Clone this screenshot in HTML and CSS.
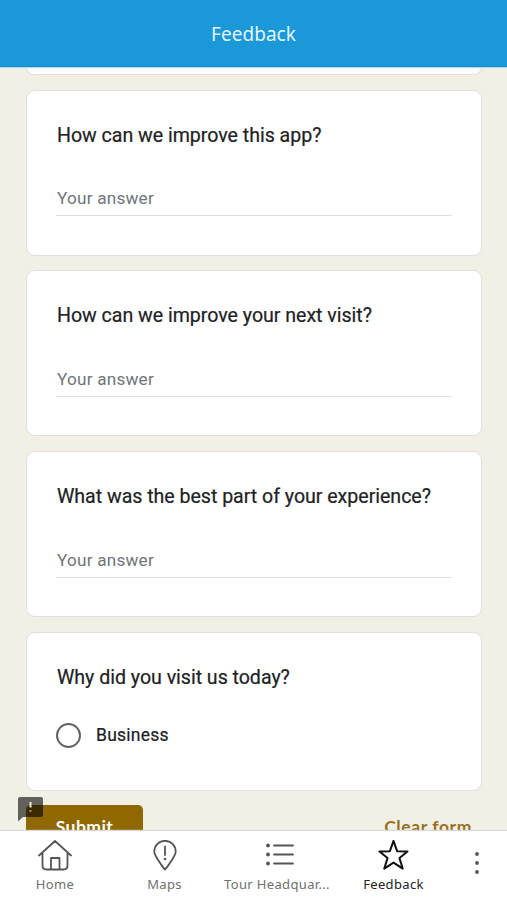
FILE: index.html
```html
<!DOCTYPE html>
<html lang="en">
<head>
<meta charset="utf-8">
<title>Feedback</title>
<link rel="stylesheet" href="styles.css">
</head>
<body>
<header class="topbar"><h1>Feedback</h1></header>
<main class="form">
  <section class="card card-tail"></section>
  <section class="card">
    <h2>How can we improve this app?</h2>
    <div class="answer">Your answer</div>
  </section>
  <section class="card">
    <h2>How can we improve your next visit?</h2>
    <div class="answer">Your answer</div>
  </section>
  <section class="card">
    <h2>What was the best part of your experience?</h2>
    <div class="answer">Your answer</div>
  </section>
  <section class="card card-choice">
    <h2>Why did you visit us today?</h2>
    <div class="choice"><span class="radio"></span><span>Business</span></div>
  </section>
  <div class="actions">
    <button class="submit">Submit</button>
    <button class="clear">Clear form</button>
    <svg class="report" width="25" height="25" viewBox="0 0 25 25"><path d="M2 0H23Q25 0 25 2V18Q25 20 23 20H5L0 24.500V2Q0 0 2 0Z" fill="#000" fill-opacity=".6"/><path d="M12.500 5V10.500" stroke="#eee8cf" stroke-width="2"/><path d="M12.500 13V15" stroke="#a89040" stroke-width="2"/></svg>
  </div>
</main>
<nav class="tabs">
  <a class="tab home">
    <svg width="34" height="32" viewBox="0 0 34 32"><path d="M1 15.500L17 1L33 15.500M4.500 12.500V25.500Q4.500 29.500 8.500 29.500H25.500Q29.500 29.500 29.500 25.500V12.500M13 29.500V18H21.500V29.500"/></svg>
    <span>Home</span>
  </a>
  <a class="tab maps">
    <svg width="24" height="32" viewBox="0 0 24 32"><path d="M12 29.500Q9.500 27 5.500 20.500C2.500 16 1.300 14.500 1.300 11.500A10.700 10.700 0 0 1 22.700 11.500C22.700 14.500 21.500 16 18.500 20.500Q14.500 27 12 29.500ZM12 6.500V15"/><circle class="dot" cx="12" cy="19" r="1.300"/></svg>
    <span>Maps</span>
  </a>
  <a class="tab tour">
    <svg width="30" height="32" viewBox="0 0 30 32"><path d="M9 5.500H28M9 14.500H28M9 23.500H28"/><circle class="dot" cx="3" cy="5.500" r="1.900"/><circle class="dot" cx="3" cy="14.500" r="1.900"/><circle class="dot" cx="3" cy="23.500" r="1.900"/></svg>
    <span>Tour Headquar...</span>
  </a>
  <a class="tab feedback">
    <svg width="32" height="32" viewBox="0 0 32 32"><path d="M15.500 .900L19.100 11.200L29.500 11.400L21.500 18.100L24.700 28.600L15.500 22.600L6.300 28.600L9.500 18.100L1.500 11.400L11.900 11.200Z"/></svg>
    <span>Feedback</span>
  </a>
  <a class="more" aria-label="More">
    <svg width="6" height="24" viewBox="0 0 6 24"><circle cx="3" cy="3" r="1.900"/><circle cx="3" cy="12" r="1.900"/><circle cx="3" cy="21" r="1.900"/></svg>
  </a>
</nav>
</body>
</html>
```

FILE: styles.css
```css
* { box-sizing: border-box; }
body {
  margin: 0;
  height: 900px;
  display: flex;
  flex-direction: column;
  overflow: hidden;
  background: #f2f0e4;
  font-family: Roboto, "Liberation Sans", sans-serif;
}
h1, h2 { margin: 0; font-weight: 400; }
.topbar {
  height: 67px;
  flex: none;
  display: flex;
  justify-content: center;
  padding-top: 20px;
  background: #1b98d7;
  border-bottom: 1px solid #168bc9;
  box-shadow: 0 1px 1px #b4dcf0;
  position: relative;
}
.topbar h1 {
  font: 400 19px/28px "Noto Sans", sans-serif;
  letter-spacing: .05px;
  color: #e2f4fd;
}
.form {
  height: 764px;
  flex: none;
  overflow: hidden;
  padding: 0 25px 0 26px;
}
.card {
  height: 166px;
  margin-bottom: 14.800px;
  padding: 31px 30px 29px;
  border: 1px solid #e0e0e4;
  border-radius: 9px;
  background: #fff;
}
.card-tail { height: 7.750px; padding: 0; border-top: 0; border-radius: 0 0 9px 9px; }
.card-choice { height: 159px; margin-bottom: 14px; }
.card h2 {
  font-size: 19.600px;
  line-height: 28px;
  letter-spacing: -.03px;
  color: #202124;
  white-space: nowrap;
  -webkit-text-stroke: .2px #202124;
}
.answer {
  height: 38px;
  margin: 28.500px -1px 0;
  padding: 8px 1px 0;
  border-bottom: 1px solid #dedfe1;
  font-size: 17.200px;
  line-height: 24px;
  letter-spacing: .2px;
  color: #70757a;
}
.choice {
  display: flex;
  align-items: center;
  gap: 15px;
  height: 26px;
  margin: 30.500px 0 0 -1px;
  font-size: 17.500px;
  letter-spacing: .25px;
  color: #202124;
  -webkit-text-stroke: .2px #202124;
}
.radio { width: 25px; height: 25px; border: 2.500px solid #5f6368; border-radius: 50%; }
.actions { position: relative; display: flex; justify-content: space-between; height: 44px; }
.actions button {
  border: 0;
  background: none;
  padding: 0;
  font: 700 17.500px/44px Lato, sans-serif;
  letter-spacing: .45px;
}
.actions .submit { width: 117px; border-radius: 5px; background: #8f6900; color: #fff; }
.actions .clear { margin-right: 10px; letter-spacing: .6px; color: #967022; }
.report { position: absolute; left: -8px; top: -8px; }
.tabs {
  position: relative;
  height: 69px;
  flex: none;
  display: grid;
  grid-template-columns: 110px 109px 116px 117px 50px;
  background: #fff;
  box-shadow: 0 -1px 1px #d8d8d8;
}
.tab {
  display: flex;
  flex-direction: column;
  align-items: center;
  padding-top: 8.500px;
  font: 400 13px/18px "Noto Sans", sans-serif;
  letter-spacing: .35px;
  color: #707070;
  white-space: nowrap;
}
.tab svg { flex: none; fill: none; stroke: #555; stroke-width: 1.800; stroke-linejoin: round; stroke-linecap: round; }
.tab span { margin-top: 3.500px; }
.tab .dot { fill: #555; stroke: none; }
.tour svg { margin-left: 5px; }
.feedback { color: #222; }
.feedback svg { stroke: #111; stroke-width: 2; }
.more { display: flex; justify-content: center; padding-top: 20px; }
.more svg { fill: #555; }
```
